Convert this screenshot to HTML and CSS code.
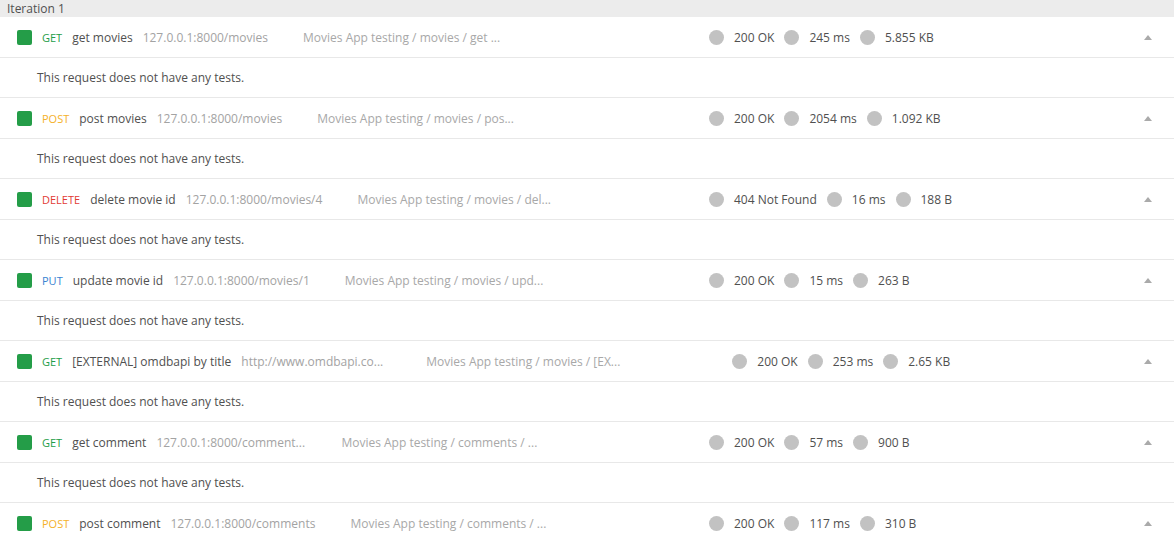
FILE: index.html
```html
<!DOCTYPE html>
<html>
<head>
<meta charset="utf-8">
<link rel="stylesheet" href="styles.css">
</head>
<body>
<div class="runner">
  <div class="iteration">Iteration 1</div>

  <div class="req">
    <div class="info">
      <span class="check"></span>
      <span class="method get">GET</span>
      <span class="name">get movies</span>
      <span class="url">127.0.0.1:8000/movies</span>
      <span class="crumb">Movies App testing / movies / get ...</span>
    </div>
    <div class="stats">
      <span class="dot"></span><span class="val">200 OK</span>
      <span class="dot"></span><span class="val">245 ms</span>
      <span class="dot"></span><span class="val">5.855 KB</span>
    </div>
    <span class="caret"></span>
  </div>
  <div class="tests">This request does not have any tests.</div>

  <div class="req">
    <div class="info">
      <span class="check"></span>
      <span class="method post">POST</span>
      <span class="name">post movies</span>
      <span class="url">127.0.0.1:8000/movies</span>
      <span class="crumb">Movies App testing / movies / pos...</span>
    </div>
    <div class="stats">
      <span class="dot"></span><span class="val">200 OK</span>
      <span class="dot"></span><span class="val">2054 ms</span>
      <span class="dot"></span><span class="val">1.092 KB</span>
    </div>
    <span class="caret"></span>
  </div>
  <div class="tests">This request does not have any tests.</div>

  <div class="req">
    <div class="info">
      <span class="check"></span>
      <span class="method delete">DELETE</span>
      <span class="name">delete movie id</span>
      <span class="url">127.0.0.1:8000/movies/4</span>
      <span class="crumb">Movies App testing / movies / del...</span>
    </div>
    <div class="stats">
      <span class="dot"></span><span class="val">404 Not Found</span>
      <span class="dot"></span><span class="val">16 ms</span>
      <span class="dot"></span><span class="val">188 B</span>
    </div>
    <span class="caret"></span>
  </div>
  <div class="tests">This request does not have any tests.</div>

  <div class="req">
    <div class="info">
      <span class="check"></span>
      <span class="method put">PUT</span>
      <span class="name">update movie id</span>
      <span class="url">127.0.0.1:8000/movies/1</span>
      <span class="crumb">Movies App testing / movies / upd...</span>
    </div>
    <div class="stats">
      <span class="dot"></span><span class="val">200 OK</span>
      <span class="dot"></span><span class="val">15 ms</span>
      <span class="dot"></span><span class="val">263 B</span>
    </div>
    <span class="caret"></span>
  </div>
  <div class="tests">This request does not have any tests.</div>

  <div class="req">
    <div class="info">
      <span class="check"></span>
      <span class="method get">GET</span>
      <span class="name">[EXTERNAL] omdbapi by title</span>
      <span class="url trunc">http://www.omdbapi.co...</span>
      <span class="crumb">Movies App testing / movies / [EX...</span>
    </div>
    <div class="stats">
      <span class="dot"></span><span class="val">200 OK</span>
      <span class="dot"></span><span class="val">253 ms</span>
      <span class="dot"></span><span class="val">2.65 KB</span>
    </div>
    <span class="caret"></span>
  </div>
  <div class="tests">This request does not have any tests.</div>

  <div class="req">
    <div class="info">
      <span class="check"></span>
      <span class="method get">GET</span>
      <span class="name">get comment</span>
      <span class="url trunc">127.0.0.1:8000/comment...</span>
      <span class="crumb">Movies App testing / comments / ...</span>
    </div>
    <div class="stats">
      <span class="dot"></span><span class="val">200 OK</span>
      <span class="dot"></span><span class="val">57 ms</span>
      <span class="dot"></span><span class="val">900 B</span>
    </div>
    <span class="caret"></span>
  </div>
  <div class="tests">This request does not have any tests.</div>

  <div class="req">
    <div class="info">
      <span class="check"></span>
      <span class="method post">POST</span>
      <span class="name">post comment</span>
      <span class="url">127.0.0.1:8000/comments</span>
      <span class="crumb">Movies App testing / comments / ...</span>
    </div>
    <div class="stats">
      <span class="dot"></span><span class="val">200 OK</span>
      <span class="dot"></span><span class="val">117 ms</span>
      <span class="dot"></span><span class="val">310 B</span>
    </div>
    <span class="caret"></span>
  </div>
</div>
</body>
</html>
```
FILE: styles.css
```css
html, body {
  margin: 0;
  padding: 0;
  background: #ffffff;
}
body {
  font-family: "Open Sans", "Liberation Sans", sans-serif;
  color: #505050;
  font-size: 12px;
  overflow: hidden;
}
.runner {
  display: flex;
  flex-direction: column;
}
.iteration {
  height: 17px;
  line-height: 17px;
  background: #ececec;
  padding-left: 7px;
  font-size: 12px;
  color: #505050;
}
.req {
  height: 40px;
  display: flex;
  align-items: center;
  border-bottom: 1px solid #e8e8e8;
  padding-left: 17px;
  padding-right: 22px;
}
.info {
  display: flex;
  align-items: center;
  min-width: 580px;
  margin-right: 112px;
  white-space: nowrap;
}
.check {
  width: 15px;
  height: 15px;
  border-radius: 2px;
  background: #249d48;
  margin-right: 10px;
}
.method {
  font-size: 11px;
  margin-right: 10px;
}
.method.get { color: #249d48; }
.method.post { color: #f5b12a; }
.method.delete { color: #e23a34; }
.method.put { color: #3a83d1; }
.name {
  color: #505050;
  margin-right: 10px;
}
.url {
  color: #a3a3a3;
  margin-right: 35px;
}
.url.trunc {
  width: 150px;
  overflow: hidden;
}
.crumb {
  color: #a8a8a8;
}
.stats {
  display: flex;
  align-items: center;
  white-space: nowrap;
}
.dot {
  width: 15px;
  height: 15px;
  border-radius: 50%;
  background: #c2c2c2;
  margin-right: 10px;
}
.val {
  margin-right: 10px;
  color: #505050;
}
.caret {
  margin-left: auto;
  width: 0;
  height: 0;
  border-left: 4px solid transparent;
  border-right: 4px solid transparent;
  border-bottom: 5px solid #aaaaaa;
}
.tests {
  height: 39px;
  line-height: 39px;
  padding-left: 37px;
  border-bottom: 1px solid #e8e8e8;
  color: #505050;
}
```
